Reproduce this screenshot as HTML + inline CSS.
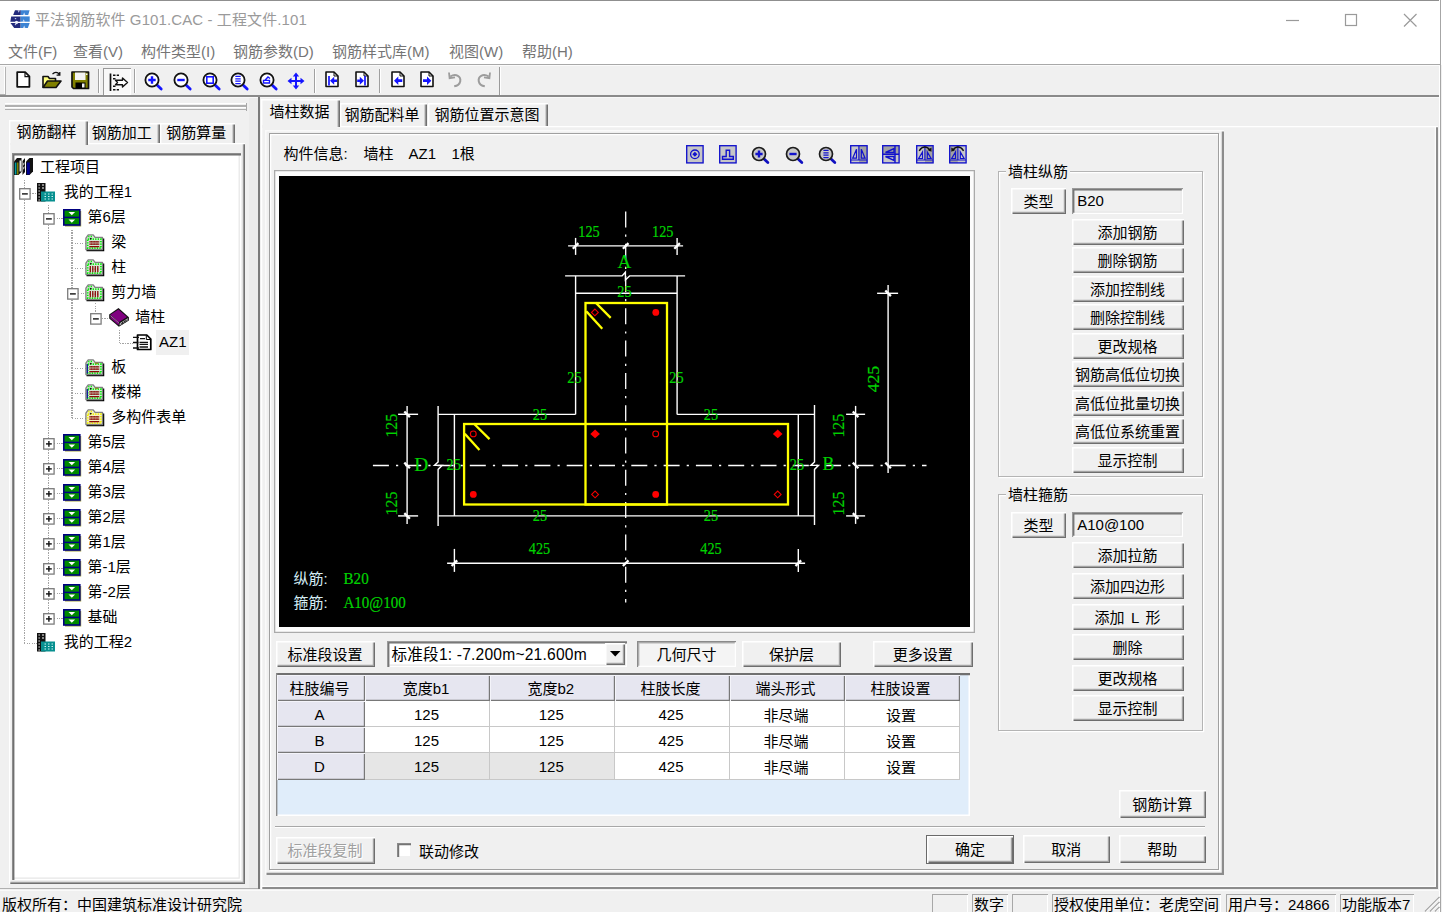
<!DOCTYPE html>
<html lang="zh-CN"><head><meta charset="utf-8"><title>平法钢筋软件 G101.CAC - 工程文件.101</title>
<style>
html,body{margin:0;padding:0}
body{width:1442px;height:912px;overflow:hidden;background:#f0f0f0;font-family:"Liberation Sans","Noto Sans CJK SC",sans-serif;font-size:15px;color:#000;position:relative;line-height:1}
div,span{box-sizing:border-box}
.a{position:absolute}
.t{position:absolute;white-space:nowrap;font-size:15px;line-height:20px;height:20px}
.btn{position:absolute;background:#f0f0f0;text-align:center;white-space:nowrap;font-size:15px;
 box-shadow:inset 1.5px 1.5px 0 #fff, inset -1px -1px 0 #6e6e6e, inset -2.2px -2.2px 0 #a3a3a3}
.btn.def{box-shadow:inset 0 0 0 1px #6a6a6a, inset 2.5px 2.5px 0 #fff, inset -2px -2px 0 #6e6e6e, inset -3.2px -3.2px 0 #a3a3a3}
.btn.dis{color:#a0a0a0;text-shadow:1px 1px 0 #fff}
.btn.pr{box-shadow:inset 1.2px 1.2px 0 #8a8a8a, inset -1.2px -1.2px 0 #fff, inset 2.4px 2.4px 0 #b4b4b4;background:#f4f4f4}
.edit{position:absolute;background:#f0f0f0;white-space:nowrap;font-size:15px;
 box-shadow:inset 1.2px 1.2px 0 #9a9a9a, inset -1.2px -1.2px 0 #fff, inset 2.4px 2.4px 0 #6e6e6e, inset -2.4px -2.4px 0 #e6e6e6}
.grp{position:absolute;border:1px solid #d0d0d0;box-shadow:inset 1px 1px 0 #fff, 1px 1px 0 #fff}
.mi{position:absolute;top:41.5px;height:20px;line-height:20px;font-size:15px;color:#757575;white-space:nowrap}
.tr{position:absolute;height:20px;line-height:20px;font-size:15px;white-space:nowrap}
.th{position:absolute;background:#e6e6f0;text-align:center;font-size:15px;white-space:nowrap;padding-right:3px;
 box-shadow:inset 1px 1px 0 #f4f4fa, inset -1.2px -1.2px 0 #787878}
.td{position:absolute;background:#fff;text-align:center;font-size:15px;white-space:nowrap;padding-right:2px;
 box-shadow:inset -1px -1px 0 #c8c8c8}
.sp{position:absolute;top:894px;height:19px;line-height:21px;font-size:15px;white-space:nowrap;padding-left:2px;
 box-shadow:inset 1px 1px 0 #a8a8a8, inset -1px 0 0 #fff}
svg{position:absolute;overflow:visible}
</style></head>
<body>
<div class="a" style="left:0px;top:0px;width:1442px;height:65px;background:#fff"></div>
<div class="a" style="left:0px;top:0px;width:1441px;height:1px;background:#8f8f8f"></div>
<div class="a" style="left:1438.6px;top:0px;width:1.7px;height:912px;background:#fff"></div>
<div class="a" style="left:1440.2px;top:0px;width:1.3px;height:912px;background:#a6a6a6"></div>
<div class="a" style="left:1441.5px;top:0px;width:0.5px;height:912px;background:#d8d8d8"></div>
<svg style="left:9.500px;top:9.700px" width="20.500" height="18.500" viewBox="0 0 20.500 18.500">
<path d="M5 0.300H10.800V5H3.200Z" fill="#222a7c"/><path d="M10.800 0.300H19.600L18.200 5H10.800Z" fill="#3c84d4"/>
<path d="M1.200 6.400H10.600V11.700H0.300Z" fill="#222a7c"/><path d="M10.600 6.400H19.700V11.700H10.600Z" fill="#3c84d4"/>
<path d="M0.500 13.100H10.600V18H4.200Z" fill="#222a7c"/><path d="M10.600 13.100H19.700L17.800 18H10.600Z" fill="#3c84d4"/>
<path d="M7.500 0.300l1.200 2.400l1.200-2.400zM13 5l1.200-2.400l1.200 2.400zM4.500 8l1 1.600l1-1.600zM12.500 11.700l1.200-2.400l1.200 2.400zM4.500 14l1 1.600l1-1.600zM13 18l1.200-2.400l1.200 2.400z" fill="#e8eefc" opacity=".8"/>
<circle cx="6.500" cy="12.400" r="1.600" fill="#eef2fc"/></svg>
<div class="t" style="left:35px;top:9.5px;color:#9a9a9a;font-size:15px;letter-spacing:0.1px">平法钢筋软件 G101.CAC - 工程文件.101</div>
<svg style="left:1280px;top:8px" width="150" height="24" viewBox="0 0 150 24">
<path d="M6 12.500h13" stroke="#9a9a9a" stroke-width="1.200" fill="none"/>
<rect x="65.500" y="6.500" width="11" height="11" stroke="#9a9a9a" stroke-width="1.200" fill="none"/>
<path d="M124 6l12.500 12.500M136.500 6l-12.500 12.500" stroke="#9a9a9a" stroke-width="1.200" fill="none"/></svg>
<div class="mi" style="left:8px">文件(F)</div>
<div class="mi" style="left:73px">查看(V)</div>
<div class="mi" style="left:141px">构件类型(I)</div>
<div class="mi" style="left:233px">钢筋参数(D)</div>
<div class="mi" style="left:332px">钢筋样式库(M)</div>
<div class="mi" style="left:449px">视图(W)</div>
<div class="mi" style="left:522px">帮助(H)</div>
<div class="a" style="left:0px;top:63.7px;width:1440px;height:1.1px;background:#a8a8a8"></div>
<div class="a" style="left:0px;top:64.8px;width:1440px;height:1px;background:#fbfbfb"></div>
<div class="a" style="left:0px;top:95px;width:1438.5px;height:2.3px;background:#8a8a8a"></div>
<div class="a" style="left:0px;top:97.3px;width:1438.5px;height:1px;background:#f8f8f8"></div>
<div class="a" style="left:3.8px;top:67px;width:1.3px;height:27.5px;background:#fff"></div>
<div class="a" style="left:5.1px;top:67px;width:1.1px;height:27.5px;background:#b4b4b4"></div>
<div class="a" style="left:0px;top:93.8px;width:5.5px;height:1px;background:#b0b0b0"></div>
<div class="a" style="left:498.5px;top:67px;width:1.5px;height:28px;background:#9a9a9a"></div>
<div class="a" style="left:500px;top:67px;width:1px;height:28px;background:#fff"></div>
<div class="a" style="left:97.5px;top:69px;width:1.2px;height:24px;background:#a0a0a0"></div>
<div class="a" style="left:98.7px;top:69px;width:1.2px;height:24px;background:#fff"></div>
<div class="a" style="left:134px;top:69px;width:1.2px;height:24px;background:#a0a0a0"></div>
<div class="a" style="left:135.2px;top:69px;width:1.2px;height:24px;background:#fff"></div>
<div class="a" style="left:314px;top:69px;width:1.2px;height:24px;background:#a0a0a0"></div>
<div class="a" style="left:315.2px;top:69px;width:1.2px;height:24px;background:#fff"></div>
<div class="a" style="left:378.5px;top:69px;width:1.2px;height:24px;background:#a0a0a0"></div>
<div class="a" style="left:379.7px;top:69px;width:1.2px;height:24px;background:#fff"></div>
<div class="a" style="left:103px;top:67.5px;width:28px;height:27px;background:#f8f8f8;box-shadow:inset 1px 1px 0 #9a9a9a, inset -1px -1px 0 #fff"></div>
<svg style="left:16px;top:71px" width="14.5" height="17" viewBox="0 0 14.5 17"><path d="M1.200 1.200h8l4.200 4.200v10.400h-12.200z" fill="#fff" stroke="#111" stroke-width="1.800" stroke-linejoin="round"/><path d="M9 1.500v4.200h4.200" fill="none" stroke="#111" stroke-width="1.200"/></svg>
<svg style="left:42px;top:70.5px" width="20" height="18" viewBox="0 0 20 18"><path d="M1 16.500V5.500h5l1.500 2h6v3" fill="#ffff80" stroke="#111" stroke-width="1.600" stroke-linejoin="round"/><path d="M1 16.500l4.500-6.500h13.500l-5 6.500z" fill="#808000" stroke="#111" stroke-width="1.600" stroke-linejoin="round"/><path d="M10.500 3.200c2-2.400 5-2.400 7 .3M17.800 1v3.200h-3.200" fill="none" stroke="#111" stroke-width="1.300"/></svg>
<svg style="left:71px;top:71px" width="18.5" height="18.5" viewBox="0 0 18.5 18.5"><path d="M1 1h16.500v16.500h-15l-1.500-1.500z" fill="#808000" stroke="#111" stroke-width="1.700" stroke-linejoin="round"/><rect x="4" y="1.500" width="10.500" height="7.500" fill="#f4f4f4"/><rect x="4.500" y="11.500" width="10" height="6" fill="#000"/><rect x="11" y="12.500" width="2.500" height="4" fill="#f4f4f4"/><rect x="15" y="2.500" width="1.500" height="1.500" fill="#f4f4f4"/></svg>
<svg style="left:109px;top:72.5px" width="20" height="19" viewBox="0 0 20 19"><path d="M1.500 0.500v17.500" stroke="#111" stroke-width="1.700" fill="none"/><path d="M4 2.300h6M4 5.800h3.500M4 13.200h3.500M4 16.700h6" stroke="#111" stroke-width="1.500" stroke-dasharray="2.500 1.200" fill="none"/><path d="M6.500 7.300h7v-2.300l5 4.500l-5 4.500v-2.300h-7l2-2.200z" fill="#fff" stroke="#111" stroke-width="1.400" stroke-linejoin="round"/></svg>
<svg style="left:141.9px;top:69.9px" width="22" height="22" viewBox="-10 -10 22 22"><path d="M4.500 4.500L9.200 9" stroke="#1414ff" stroke-width="2.800" stroke-linecap="round" fill="none"/><circle cx="0" cy="0" r="6.600" fill="#fff" stroke="#111" stroke-width="1.800"/><path d="M-3.700 0h7.400M0 -3.700v7.400" stroke="#1414ff" stroke-width="2.400" fill="none"/></svg>
<svg style="left:170.7px;top:69.9px" width="22" height="22" viewBox="-10 -10 22 22"><path d="M4.500 4.500L9.200 9" stroke="#1414ff" stroke-width="2.800" stroke-linecap="round" fill="none"/><circle cx="0" cy="0" r="6.600" fill="#fff" stroke="#111" stroke-width="1.800"/><path d="M-3.700 0h7.400" stroke="#1414ff" stroke-width="2.400" fill="none"/></svg>
<svg style="left:199.6px;top:69.9px" width="22" height="22" viewBox="-10 -10 22 22"><path d="M4.500 4.500L9.200 9" stroke="#1414ff" stroke-width="2.800" stroke-linecap="round" fill="none"/><circle cx="0" cy="0" r="6.600" fill="#fff" stroke="#111" stroke-width="1.800"/><rect x="-3.200" y="-3.200" width="6.400" height="6.400" stroke="#1414ff" stroke-width="1.600" fill="none"/></svg>
<svg style="left:228.4px;top:69.9px" width="22" height="22" viewBox="-10 -10 22 22"><path d="M4.500 4.500L9.200 9" stroke="#1414ff" stroke-width="2.800" stroke-linecap="round" fill="none"/><circle cx="0" cy="0" r="6.600" fill="#fff" stroke="#111" stroke-width="1.800"/><path d="M-2.700 -3.600h5.400M-2.700 -1.200h5.400M-2.700 1.200h5.400M-2.700 3.600h5.400" stroke="#1414ff" stroke-width="1.300" fill="none"/></svg>
<svg style="left:257.4px;top:69.9px" width="22" height="22" viewBox="-10 -10 22 22"><path d="M4.500 4.500L9.200 9" stroke="#1414ff" stroke-width="2.800" stroke-linecap="round" fill="none"/><circle cx="0" cy="0" r="6.600" fill="#fff" stroke="#111" stroke-width="1.800"/><path d="M-3.500 3v-2.600h6v2.600zM-2 0.300l3-3.300l2 1.500" stroke="#1414ff" stroke-width="1.400" fill="none"/></svg>
<svg style="left:287px;top:72px" width="18" height="18" viewBox="0 0 18 18"><path d="M9 0.500l3.200 4h-2.200v3.500h3.500v-2.200l4 3.200l-4 3.200v-2.200h-3.500v3.500h2.200l-3.200 4l-3.200-4h2.200v-3.500h-3.500v2.200l-4-3.200l4-3.200v2.200h3.500v-3.500h-2.200z" fill="#1414ff"/></svg>
<svg style="left:325px;top:71.3px" width="14" height="16.5" viewBox="0 0 14 16.5"><path d="M1 1h8 l4 4 v10.5 h-12 z" fill="#fff" stroke="#111" stroke-width="1.600" stroke-linejoin="round"/><path d="M9 1v4h4" fill="none" stroke="#111" stroke-width="1"/><path d="M4 5v9.500" stroke="#1414ff" stroke-width="1.700" fill="none"/><path d="M5 9.700l4.200-4v2.700h2.800v2.600h-2.800v2.700z" fill="#1414ff"/></svg>
<svg style="left:354.9px;top:71.3px" width="14" height="16.5" viewBox="0 0 14 16.5"><path d="M1 1h8 l4 4 v10.5 h-12 z" fill="#fff" stroke="#111" stroke-width="1.600" stroke-linejoin="round"/><path d="M9 1v4h4" fill="none" stroke="#111" stroke-width="1"/><path d="M10 5v9.500" stroke="#1414ff" stroke-width="1.700" fill="none"/><path d="M9 9.700l-4.200-4v2.700h-2.600v2.600h2.600v2.700z" fill="#1414ff"/></svg>
<svg style="left:391px;top:71.3px" width="14" height="16.5" viewBox="0 0 14 16.5"><path d="M1 1h8 l4 4 v10.5 h-12 z" fill="#fff" stroke="#111" stroke-width="1.600" stroke-linejoin="round"/><path d="M9 1v4h4" fill="none" stroke="#111" stroke-width="1"/><path d="M3 9.700l4.300-4.200v2.800h4v2.800h-4v2.800z" fill="#1414ff"/></svg>
<svg style="left:419.7px;top:71.3px" width="14" height="16.5" viewBox="0 0 14 16.5"><path d="M1 1h8 l4 4 v10.5 h-12 z" fill="#fff" stroke="#111" stroke-width="1.600" stroke-linejoin="round"/><path d="M9 1v4h4" fill="none" stroke="#111" stroke-width="1"/><path d="M11.300 9.700l-4.300-4.200v2.800h-4v2.800h4v2.800z" fill="#1414ff"/></svg>
<svg style="left:448px;top:70.7px" width="13.5" height="16.5" viewBox="0 0 13.5 16.5"><path d="M2.200 5.500c6-3.500 11 0 10 5c-.6 2.700-3 4.300-6 4.800" fill="none" stroke="#9c9c9c" stroke-width="2"/><path d="M1 1.500l.6 5.600l5.400-.8" fill="none" stroke="#9c9c9c" stroke-width="1.800"/></svg>
<svg style="left:477px;top:70.7px" width="13.5" height="16.5" viewBox="0 0 13.5 16.5"><path d="M11.800 5.500c-6-3.500-11 0-10 5c.6 2.700 3 4.300 6 4.800" fill="none" stroke="#9c9c9c" stroke-width="2"/><path d="M13 1.500l-.6 5.600l-5.400-.8" fill="none" stroke="#9c9c9c" stroke-width="1.800"/></svg>
<div class="a" style="left:5px;top:103px;width:242px;height:1.3px;background:#fff"></div>
<div class="a" style="left:5px;top:105.4px;width:242px;height:1.2px;background:#b0b0b0"></div>
<div class="a" style="left:5px;top:107.2px;width:242px;height:1.3px;background:#fff"></div>
<div class="a" style="left:5px;top:109.2px;width:242px;height:1.2px;background:#b0b0b0"></div>
<div class="a" style="left:246px;top:103px;width:1.2px;height:7.5px;background:#a8a8a8"></div>
<div class="a" style="left:9px;top:143.3px;width:235.5px;height:740.4px;box-shadow:inset 1.3px 1.3px 0 #fff, inset -1.1px -1.1px 0 #707070, inset -2.200px -2.200px 0 #a0a0a0"></div>
<div class="a" style="left:87.5px;top:122.9px;width:72px;height:20.6px;background:#f0f0f0;box-shadow:inset 1.4px 1.4px 0 #fff, inset -1.2px 0 0 #707070, inset -2.4px 0 0 #a0a0a0;"></div>
<div class="a" style="left:159.5px;top:122.9px;width:75px;height:20.6px;background:#f0f0f0;box-shadow:inset 1.4px 1.4px 0 #fff, inset -1.2px 0 0 #707070, inset -2.4px 0 0 #a0a0a0;"></div>
<div class="a" style="left:9px;top:119.6px;width:78.5px;height:25px;background:#f0f0f0;box-shadow:inset 1.4px 1.4px 0 #fff, inset -1.2px 0 0 #707070, inset -2.4px 0 0 #a0a0a0;"></div>
<div class="a" style="left:10.4px;top:142.8px;width:74.8px;height:2.6px;background:#f0f0f0"></div>
<div class="t" style="left:16.5px;top:121.8px;">钢筋翻样</div>
<div class="t" style="left:91.7px;top:122.9px;">钢筋加工</div>
<div class="t" style="left:166.2px;top:122.9px;">钢筋算量</div>
<div class="a" style="left:11.5px;top:153.1px;width:229.7px;height:726.6px;background:#fff;box-shadow:inset 1.2px 1.2px 0 #8c8c8c, inset 2.400px 2.400px 0 #6a6a6a, inset -1.2px -1.2px 0 #fff, inset -2.400px -2.400px 0 #e6e6e6"></div>
<div class="a" style="left:23.8px;top:180px;width:1.200px;height:462.5px;background-image:repeating-linear-gradient(to bottom,#a4a4a4 0,#a4a4a4 1.250px,transparent 1.250px,transparent 2.500px)"></div>
<div class="a" style="left:47.5px;top:205px;width:1.200px;height:412.5px;background-image:repeating-linear-gradient(to bottom,#a4a4a4 0,#a4a4a4 1.250px,transparent 1.250px,transparent 2.500px)"></div>
<div class="a" style="left:71.4px;top:230px;width:1.200px;height:187.5px;background-image:repeating-linear-gradient(to bottom,#a4a4a4 0,#a4a4a4 1.250px,transparent 1.250px,transparent 2.500px)"></div>
<div class="a" style="left:95.2px;top:303px;width:1.200px;height:8.5px;background-image:repeating-linear-gradient(to bottom,#a4a4a4 0,#a4a4a4 1.250px,transparent 1.250px,transparent 2.500px)"></div>
<div class="a" style="left:118.9px;top:330px;width:1.200px;height:12.5px;background-image:repeating-linear-gradient(to bottom,#a4a4a4 0,#a4a4a4 1.250px,transparent 1.250px,transparent 2.500px)"></div>
<div class="a" style="left:30px;top:192.7px;width:8px;height:1.200px;background-image:repeating-linear-gradient(to right,#a4a4a4 0,#a4a4a4 1.250px,transparent 1.250px,transparent 2.500px)"></div>
<div class="a" style="left:24.4px;top:642.7px;width:13.6px;height:1.200px;background-image:repeating-linear-gradient(to right,#a4a4a4 0,#a4a4a4 1.250px,transparent 1.250px,transparent 2.500px)"></div>
<div class="a" style="left:54px;top:217.7px;width:8.5px;height:1.200px;background-image:repeating-linear-gradient(to right,#a4a4a4 0,#a4a4a4 1.250px,transparent 1.250px,transparent 2.500px)"></div>
<div class="a" style="left:54px;top:442.7px;width:8.5px;height:1.200px;background-image:repeating-linear-gradient(to right,#a4a4a4 0,#a4a4a4 1.250px,transparent 1.250px,transparent 2.500px)"></div>
<div class="a" style="left:54px;top:467.7px;width:8.5px;height:1.200px;background-image:repeating-linear-gradient(to right,#a4a4a4 0,#a4a4a4 1.250px,transparent 1.250px,transparent 2.500px)"></div>
<div class="a" style="left:54px;top:492.7px;width:8.5px;height:1.200px;background-image:repeating-linear-gradient(to right,#a4a4a4 0,#a4a4a4 1.250px,transparent 1.250px,transparent 2.500px)"></div>
<div class="a" style="left:54px;top:517.7px;width:8.5px;height:1.200px;background-image:repeating-linear-gradient(to right,#a4a4a4 0,#a4a4a4 1.250px,transparent 1.250px,transparent 2.500px)"></div>
<div class="a" style="left:54px;top:542.7px;width:8.5px;height:1.200px;background-image:repeating-linear-gradient(to right,#a4a4a4 0,#a4a4a4 1.250px,transparent 1.250px,transparent 2.500px)"></div>
<div class="a" style="left:54px;top:567.7px;width:8.5px;height:1.200px;background-image:repeating-linear-gradient(to right,#a4a4a4 0,#a4a4a4 1.250px,transparent 1.250px,transparent 2.500px)"></div>
<div class="a" style="left:54px;top:592.7px;width:8.5px;height:1.200px;background-image:repeating-linear-gradient(to right,#a4a4a4 0,#a4a4a4 1.250px,transparent 1.250px,transparent 2.500px)"></div>
<div class="a" style="left:54px;top:617.7px;width:8.5px;height:1.200px;background-image:repeating-linear-gradient(to right,#a4a4a4 0,#a4a4a4 1.250px,transparent 1.250px,transparent 2.500px)"></div>
<div class="a" style="left:72px;top:242.7px;width:13.5px;height:1.200px;background-image:repeating-linear-gradient(to right,#a4a4a4 0,#a4a4a4 1.250px,transparent 1.250px,transparent 2.500px)"></div>
<div class="a" style="left:72px;top:267.7px;width:13.5px;height:1.200px;background-image:repeating-linear-gradient(to right,#a4a4a4 0,#a4a4a4 1.250px,transparent 1.250px,transparent 2.500px)"></div>
<div class="a" style="left:72px;top:367.7px;width:13.5px;height:1.200px;background-image:repeating-linear-gradient(to right,#a4a4a4 0,#a4a4a4 1.250px,transparent 1.250px,transparent 2.500px)"></div>
<div class="a" style="left:72px;top:392.7px;width:13.5px;height:1.200px;background-image:repeating-linear-gradient(to right,#a4a4a4 0,#a4a4a4 1.250px,transparent 1.250px,transparent 2.500px)"></div>
<div class="a" style="left:72px;top:417.7px;width:13.5px;height:1.200px;background-image:repeating-linear-gradient(to right,#a4a4a4 0,#a4a4a4 1.250px,transparent 1.250px,transparent 2.500px)"></div>
<div class="a" style="left:78px;top:292.7px;width:7px;height:1.200px;background-image:repeating-linear-gradient(to right,#a4a4a4 0,#a4a4a4 1.250px,transparent 1.250px,transparent 2.500px)"></div>
<div class="a" style="left:101.5px;top:317.7px;width:7.5px;height:1.200px;background-image:repeating-linear-gradient(to right,#a4a4a4 0,#a4a4a4 1.250px,transparent 1.250px,transparent 2.500px)"></div>
<div class="a" style="left:119.5px;top:342.7px;width:13px;height:1.200px;background-image:repeating-linear-gradient(to right,#a4a4a4 0,#a4a4a4 1.250px,transparent 1.250px,transparent 2.500px)"></div>
<svg style="left:13.2px;top:157.2px" width="21" height="19" viewBox="0 0 21 19"><path d="M1 4.500l3-3.500h4.500v14l-3 3h-4.500z" fill="#111"/><path d="M1.800 5.500h1.600v12h-1.600z" fill="#00a0a0"/><path d="M4 5.500h1.500v12h-1.500z" fill="#808000"/><path d="M6.500 3.500h1.600v11h-1.600z" fill="#e8e8e8"/><path d="M9.500 4l2.500-3v14l-2.500 3z" fill="#111"/><path d="M10.200 6.500l1.200-1.400v2.200l-1.200 1.400zM10.200 10.500l1.200-1.400v2.200l-1.200 1.400z" fill="#ddd"/><path d="M13 4.500l3.500-3.500h3.500v13.500l-3.500 3.500h-3.500z" fill="#111"/><path d="M13.800 5.500h3v12h-3z" fill="#000090"/></svg>
<div class="tr" style="left:40px;top:157px">工程项目</div>
<svg style="left:18.9px;top:187.7px" width="11.8" height="11.8" viewBox="0 0 11.8 11.8"><rect x="0.700" y="0.700" width="10.400" height="10.400" fill="#fff" stroke="#7c7c7c" stroke-width="1.300"/><path d="M3 5.900h5.800" stroke="#111" stroke-width="1.400"/></svg>
<svg style="left:37.4px;top:182.5px" width="18" height="19" viewBox="0 0 18 19"><rect x="0" y="0" width="8.500" height="18.500" fill="#111"/><rect x="4" y="8.500" width="14" height="10" fill="#089090"/><path d="M1.500 2h1.300M1.500 5h1.300M1.500 8h1.300M1.500 11h1.300M1.500 14h1.300M1.500 17h1.300M5 2h2M5 5h2" stroke="#fff" stroke-width="1.200"/><path d="M7.500 11h1.500M11 11h1.500M14.500 11h1.500M7.500 13.500h1.500M11 13.500h1.500M14.500 13.500h1.500M7.500 16h1.500M11 16h1.500M14.500 16h1.500" stroke="#c8f0f0" stroke-width="1.200"/></svg>
<div class="tr" style="left:63.7px;top:182px">我的工程1</div>
<svg style="left:42.6px;top:212.7px" width="11.8" height="11.8" viewBox="0 0 11.8 11.8"><rect x="0.700" y="0.700" width="10.400" height="10.400" fill="#fff" stroke="#7c7c7c" stroke-width="1.300"/><path d="M3 5.900h5.800" stroke="#111" stroke-width="1.400"/></svg>
<svg style="left:62.6px;top:208.8px" width="19" height="18.5" viewBox="0 0 19 18.5"><rect x="2" y="2" width="16.200" height="15.500" fill="#a0a040"/><rect x="0.800" y="0.800" width="16" height="15.200" fill="#008a00" stroke="#000080" stroke-width="1.600"/><path d="M1 8.400h15.500" stroke="#000080" stroke-width="1.500"/><path d="M5.500 3l3.300 3.300l3.300-3.300zM5.500 10.500l3.300 3.300l3.300-3.300z" fill="#fff"/></svg>
<div class="tr" style="left:87.4px;top:207px">第6层</div>
<svg style="left:85.4px;top:234px" width="19.5" height="17.5" viewBox="0 0 19.5 17.5"><path d="M1.500 16.300h16.800v-11.800" fill="none" stroke="#000" stroke-width="1.900"/><path d="M0.900 15.500v-11.300l2.300-3.300h5l1.900 2.500h7.400v12.100z" fill="#d4e8d4" stroke="#808080" stroke-width="1.300" stroke-linejoin="round"/><path d="M2.700 5.200h13.200v9h-13.200z" fill="none" stroke="#00ee00" stroke-width="1.700" stroke-dasharray="1.250 1.250"/><path d="M3.200 2.600h4.300" stroke="#00ee00" stroke-width="1.500" stroke-dasharray="1.250 1.250"/><path d="M4.800 3.600l2.400 1.100l-2.400 1.100z" fill="#111"/><path d="M4.300 7.800h10M4.300 10.200h10M4.300 12.600h10" stroke="#8a0a0a" stroke-width="1.300"/><path d="M6.500 7v6.300M9.300 7v6.300M12 7v6.300" stroke="#8a0a0a" stroke-width="0.700" stroke-dasharray="1.250 1.250"/></svg>
<div class="tr" style="left:111.3px;top:232px">梁</div>
<svg style="left:85.4px;top:259px" width="19.5" height="17.5" viewBox="0 0 19.5 17.5"><path d="M1.500 16.300h16.800v-11.800" fill="none" stroke="#000" stroke-width="1.900"/><path d="M0.900 15.500v-11.300l2.300-3.300h5l1.900 2.500h7.400v12.100z" fill="#d4e8d4" stroke="#808080" stroke-width="1.300" stroke-linejoin="round"/><path d="M2.700 5.200h13.200v9h-13.200z" fill="none" stroke="#00ee00" stroke-width="1.700" stroke-dasharray="1.250 1.250"/><path d="M3.200 2.600h4.300" stroke="#00ee00" stroke-width="1.500" stroke-dasharray="1.250 1.250"/><path d="M4.800 3.600l2.400 1.100l-2.400 1.100z" fill="#111"/><path d="M5.300 7v6.200M7.800 7v6.200M10.300 7v6.200M12.800 7v6.200" stroke="#8a0a0a" stroke-width="1.300"/><path d="M4.500 10.100h9.500" stroke="#8a0a0a" stroke-width="0.800" stroke-dasharray="1.250 1.250"/></svg>
<div class="tr" style="left:111.3px;top:257px">柱</div>
<svg style="left:66.5px;top:287.7px" width="11.8" height="11.8" viewBox="0 0 11.8 11.8"><rect x="0.700" y="0.700" width="10.400" height="10.400" fill="#fff" stroke="#7c7c7c" stroke-width="1.300"/><path d="M3 5.900h5.800" stroke="#111" stroke-width="1.400"/></svg>
<svg style="left:85.4px;top:284px" width="19.5" height="17.5" viewBox="0 0 19.5 17.5"><path d="M1.500 16.300h16.800v-11.800" fill="none" stroke="#000" stroke-width="1.900"/><path d="M0.900 15.500v-11.300l2.300-3.300h5l1.900 2.500h7.400v12.100z" fill="#d4e8d4" stroke="#808080" stroke-width="1.300" stroke-linejoin="round"/><path d="M2.700 5.200h13.200v9h-13.200z" fill="none" stroke="#00ee00" stroke-width="1.700" stroke-dasharray="1.250 1.250"/><path d="M3.200 2.600h4.300" stroke="#00ee00" stroke-width="1.500" stroke-dasharray="1.250 1.250"/><path d="M4.800 3.600l2.400 1.100l-2.400 1.100z" fill="#111"/><path d="M5.300 7v6.200M7.800 7v6.200M10.300 7v6.200M12.800 7v6.200" stroke="#8a0a0a" stroke-width="1.300"/><path d="M4.500 10.100h9.500" stroke="#8a0a0a" stroke-width="0.800" stroke-dasharray="1.250 1.250"/></svg>
<div class="tr" style="left:111.3px;top:282px">剪力墙</div>
<svg style="left:90.3px;top:312.7px" width="11.8" height="11.8" viewBox="0 0 11.8 11.8"><rect x="0.700" y="0.700" width="10.400" height="10.400" fill="#fff" stroke="#7c7c7c" stroke-width="1.300"/><path d="M3 5.900h5.800" stroke="#111" stroke-width="1.400"/></svg>
<svg style="left:109px;top:307.7px" width="20" height="19" viewBox="0 0 20 19"><path d="M0.200 6.500l9.300-6.400l10.400 9.200v3.300l-10 6.200l-9.700-8.300z" fill="#111"/><path d="M1.400 6.800l8-5.400l8.600 7.600l-8.300 5.200z" fill="#800080"/><path d="M1.400 8.300v1.900l8 6.800l.6-1.700z" fill="#800080"/><path d="M1.400 7.600l8.500 7.300" stroke="#d8a8d8" stroke-width=".7" fill="none"/><path d="M10.800 15.200l8-5v2l-8.300 5.200z" fill="#e4e4e4"/><path d="M11.500 16l7-4.400M13.500 13.700v2.500M16 12.200v2.500" stroke="#222" stroke-width=".9" fill="none"/></svg>
<div class="tr" style="left:135.3px;top:307px">墙柱</div>
<svg style="left:132.7px;top:334px" width="18.5" height="17" viewBox="0 0 18.5 17"><path d="M4.500 1h9.300l4 4v10.500h-13.300z" fill="#fff" stroke="#000" stroke-width="1.700" stroke-linejoin="round"/><path d="M13.300 1.500v4h4" fill="none" stroke="#000" stroke-width="1"/><path d="M0 3.300h6M0 8.500h5.500M0 14h6" stroke="#111" stroke-width="1.300"/><path d="M7 4.600h5M6.500 8.400h8.500M6.500 10.400h8.500M6.500 13h8.500" stroke="#111" stroke-width="1.300"/></svg>
<div class="a" style="left:156.4px;top:330.3px;width:32.5px;height:24.8px;background:#f0f0f0"></div>
<div class="tr" style="left:159px;top:332px">AZ1</div>
<svg style="left:85.4px;top:359px" width="19.5" height="17.5" viewBox="0 0 19.5 17.5"><path d="M1.500 16.300h16.800v-11.800" fill="none" stroke="#000" stroke-width="1.900"/><path d="M0.900 15.500v-11.300l2.300-3.300h5l1.900 2.500h7.400v12.100z" fill="#d4e8d4" stroke="#808080" stroke-width="1.300" stroke-linejoin="round"/><path d="M2.700 5.200h13.200v9h-13.200z" fill="none" stroke="#00ee00" stroke-width="1.700" stroke-dasharray="1.250 1.250"/><path d="M3.200 2.600h4.300" stroke="#00ee00" stroke-width="1.500" stroke-dasharray="1.250 1.250"/><path d="M4.800 3.600l2.400 1.100l-2.400 1.100z" fill="#111"/><path d="M4.300 7.800h10M4.300 10.200h10M4.300 12.600h10" stroke="#8a0a0a" stroke-width="1.300"/><path d="M6.500 7v6.300M9.300 7v6.300M12 7v6.300" stroke="#8a0a0a" stroke-width="0.700" stroke-dasharray="1.250 1.250"/><path d="M2.300 5v9.500" stroke="#1010a0" stroke-width="1.300"/><path d="M9.800 4.300h3.500" stroke="#909020" stroke-width="1.300"/></svg>
<div class="tr" style="left:111.3px;top:357px">板</div>
<svg style="left:85.4px;top:384px" width="19.5" height="17.5" viewBox="0 0 19.5 17.5"><path d="M1.500 16.300h16.800v-11.800" fill="none" stroke="#000" stroke-width="1.900"/><path d="M0.900 15.500v-11.300l2.300-3.300h5l1.900 2.500h7.400v12.100z" fill="#d4e8d4" stroke="#808080" stroke-width="1.300" stroke-linejoin="round"/><path d="M2.700 5.200h13.200v9h-13.200z" fill="none" stroke="#00ee00" stroke-width="1.700" stroke-dasharray="1.250 1.250"/><path d="M3.200 2.600h4.300" stroke="#00ee00" stroke-width="1.500" stroke-dasharray="1.250 1.250"/><path d="M4.800 3.600l2.400 1.100l-2.400 1.100z" fill="#111"/><path d="M4.300 7.800h10M4.300 10.200h10M4.300 12.600h10" stroke="#8a0a0a" stroke-width="1.300"/><path d="M6.500 7v6.300M9.300 7v6.300M12 7v6.300" stroke="#8a0a0a" stroke-width="0.700" stroke-dasharray="1.250 1.250"/><path d="M2.300 5v9.500" stroke="#1010a0" stroke-width="1.300"/><path d="M9.800 4.300h3.500" stroke="#909020" stroke-width="1.300"/></svg>
<div class="tr" style="left:111.3px;top:382px">楼梯</div>
<svg style="left:85.4px;top:409px" width="19.5" height="17.5" viewBox="0 0 19.5 17.5"><path d="M1.500 16.300h16.800v-11.800" fill="none" stroke="#000" stroke-width="1.900"/><path d="M0.900 15.500v-11.300l2.300-3.300h5l1.900 2.500h7.400v12.100z" fill="#f4f0c0" stroke="#808080" stroke-width="1.300" stroke-linejoin="round"/><path d="M2.700 5.200h13.200v9h-13.200z" fill="none" stroke="#f0f000" stroke-width="1.700" stroke-dasharray="1.250 1.250"/><path d="M3.200 2.600h4.300" stroke="#f0f000" stroke-width="1.500" stroke-dasharray="1.250 1.250"/><path d="M4.800 3.600l2.400 1.100l-2.400 1.100z" fill="#111"/><path d="M4.300 7.800h10M4.300 10.200h10M4.300 12.600h10" stroke="#8a0a0a" stroke-width="1.300"/><path d="M6.500 7v6.300M9.300 7v6.300M12 7v6.300" stroke="#8a0a0a" stroke-width="0.700" stroke-dasharray="1.250 1.250"/></svg>
<div class="tr" style="left:111.3px;top:407px">多构件表单</div>
<svg style="left:42.6px;top:437.7px" width="11.8" height="11.8" viewBox="0 0 11.8 11.8"><rect x="0.700" y="0.700" width="10.400" height="10.400" fill="#fff" stroke="#7c7c7c" stroke-width="1.300"/><path d="M3 5.900h5.800" stroke="#111" stroke-width="1.400"/><path d="M5.900 3v5.800" stroke="#111" stroke-width="1.400"/></svg>
<svg style="left:62.6px;top:433.8px" width="19" height="18.5" viewBox="0 0 19 18.5"><rect x="2" y="2" width="16.200" height="15.500" fill="#a0a040"/><rect x="0.800" y="0.800" width="16" height="15.200" fill="#008a00" stroke="#000080" stroke-width="1.600"/><path d="M1 8.400h15.500" stroke="#000080" stroke-width="1.500"/><path d="M5.500 3l3.300 3.300l3.300-3.300zM5.500 10.500l3.300 3.300l3.300-3.300z" fill="#fff"/></svg>
<div class="tr" style="left:87.4px;top:432px">第5层</div>
<svg style="left:42.6px;top:462.7px" width="11.8" height="11.8" viewBox="0 0 11.8 11.8"><rect x="0.700" y="0.700" width="10.400" height="10.400" fill="#fff" stroke="#7c7c7c" stroke-width="1.300"/><path d="M3 5.900h5.800" stroke="#111" stroke-width="1.400"/><path d="M5.900 3v5.800" stroke="#111" stroke-width="1.400"/></svg>
<svg style="left:62.6px;top:458.8px" width="19" height="18.5" viewBox="0 0 19 18.5"><rect x="2" y="2" width="16.200" height="15.500" fill="#a0a040"/><rect x="0.800" y="0.800" width="16" height="15.200" fill="#008a00" stroke="#000080" stroke-width="1.600"/><path d="M1 8.400h15.500" stroke="#000080" stroke-width="1.500"/><path d="M5.500 3l3.300 3.300l3.300-3.300zM5.500 10.500l3.300 3.300l3.300-3.300z" fill="#fff"/></svg>
<div class="tr" style="left:87.4px;top:457px">第4层</div>
<svg style="left:42.6px;top:487.7px" width="11.8" height="11.8" viewBox="0 0 11.8 11.8"><rect x="0.700" y="0.700" width="10.400" height="10.400" fill="#fff" stroke="#7c7c7c" stroke-width="1.300"/><path d="M3 5.900h5.800" stroke="#111" stroke-width="1.400"/><path d="M5.900 3v5.800" stroke="#111" stroke-width="1.400"/></svg>
<svg style="left:62.6px;top:483.8px" width="19" height="18.5" viewBox="0 0 19 18.5"><rect x="2" y="2" width="16.200" height="15.500" fill="#a0a040"/><rect x="0.800" y="0.800" width="16" height="15.200" fill="#008a00" stroke="#000080" stroke-width="1.600"/><path d="M1 8.400h15.500" stroke="#000080" stroke-width="1.500"/><path d="M5.500 3l3.300 3.300l3.300-3.300zM5.500 10.500l3.300 3.300l3.300-3.300z" fill="#fff"/></svg>
<div class="tr" style="left:87.4px;top:482px">第3层</div>
<svg style="left:42.6px;top:512.7px" width="11.8" height="11.8" viewBox="0 0 11.8 11.8"><rect x="0.700" y="0.700" width="10.400" height="10.400" fill="#fff" stroke="#7c7c7c" stroke-width="1.300"/><path d="M3 5.900h5.800" stroke="#111" stroke-width="1.400"/><path d="M5.900 3v5.800" stroke="#111" stroke-width="1.400"/></svg>
<svg style="left:62.6px;top:508.8px" width="19" height="18.5" viewBox="0 0 19 18.5"><rect x="2" y="2" width="16.200" height="15.500" fill="#a0a040"/><rect x="0.800" y="0.800" width="16" height="15.200" fill="#008a00" stroke="#000080" stroke-width="1.600"/><path d="M1 8.400h15.500" stroke="#000080" stroke-width="1.500"/><path d="M5.500 3l3.300 3.300l3.300-3.300zM5.500 10.500l3.300 3.300l3.300-3.300z" fill="#fff"/></svg>
<div class="tr" style="left:87.4px;top:507px">第2层</div>
<svg style="left:42.6px;top:537.7px" width="11.8" height="11.8" viewBox="0 0 11.8 11.8"><rect x="0.700" y="0.700" width="10.400" height="10.400" fill="#fff" stroke="#7c7c7c" stroke-width="1.300"/><path d="M3 5.900h5.800" stroke="#111" stroke-width="1.400"/><path d="M5.900 3v5.800" stroke="#111" stroke-width="1.400"/></svg>
<svg style="left:62.6px;top:533.8px" width="19" height="18.5" viewBox="0 0 19 18.5"><rect x="2" y="2" width="16.200" height="15.500" fill="#a0a040"/><rect x="0.800" y="0.800" width="16" height="15.200" fill="#008a00" stroke="#000080" stroke-width="1.600"/><path d="M1 8.400h15.500" stroke="#000080" stroke-width="1.500"/><path d="M5.500 3l3.300 3.300l3.300-3.300zM5.500 10.500l3.300 3.300l3.300-3.300z" fill="#fff"/></svg>
<div class="tr" style="left:87.4px;top:532px">第1层</div>
<svg style="left:42.6px;top:562.7px" width="11.8" height="11.8" viewBox="0 0 11.8 11.8"><rect x="0.700" y="0.700" width="10.400" height="10.400" fill="#fff" stroke="#7c7c7c" stroke-width="1.300"/><path d="M3 5.900h5.800" stroke="#111" stroke-width="1.400"/><path d="M5.900 3v5.800" stroke="#111" stroke-width="1.400"/></svg>
<svg style="left:62.6px;top:558.8px" width="19" height="18.5" viewBox="0 0 19 18.5"><rect x="2" y="2" width="16.200" height="15.500" fill="#a0a040"/><rect x="0.800" y="0.800" width="16" height="15.200" fill="#008a00" stroke="#000080" stroke-width="1.600"/><path d="M1 8.400h15.500" stroke="#000080" stroke-width="1.500"/><path d="M5.500 3l3.300 3.300l3.300-3.300zM5.500 10.500l3.300 3.300l3.300-3.300z" fill="#fff"/></svg>
<div class="tr" style="left:87.4px;top:557px">第-1层</div>
<svg style="left:42.6px;top:587.7px" width="11.8" height="11.8" viewBox="0 0 11.8 11.8"><rect x="0.700" y="0.700" width="10.400" height="10.400" fill="#fff" stroke="#7c7c7c" stroke-width="1.300"/><path d="M3 5.900h5.800" stroke="#111" stroke-width="1.400"/><path d="M5.900 3v5.800" stroke="#111" stroke-width="1.400"/></svg>
<svg style="left:62.6px;top:583.8px" width="19" height="18.5" viewBox="0 0 19 18.5"><rect x="2" y="2" width="16.200" height="15.500" fill="#a0a040"/><rect x="0.800" y="0.800" width="16" height="15.200" fill="#008a00" stroke="#000080" stroke-width="1.600"/><path d="M1 8.400h15.500" stroke="#000080" stroke-width="1.500"/><path d="M5.500 3l3.300 3.300l3.300-3.300zM5.500 10.500l3.300 3.300l3.300-3.300z" fill="#fff"/></svg>
<div class="tr" style="left:87.4px;top:582px">第-2层</div>
<svg style="left:42.6px;top:612.7px" width="11.8" height="11.8" viewBox="0 0 11.8 11.8"><rect x="0.700" y="0.700" width="10.400" height="10.400" fill="#fff" stroke="#7c7c7c" stroke-width="1.300"/><path d="M3 5.900h5.800" stroke="#111" stroke-width="1.400"/><path d="M5.900 3v5.800" stroke="#111" stroke-width="1.400"/></svg>
<svg style="left:62.6px;top:608.8px" width="19" height="18.5" viewBox="0 0 19 18.5"><rect x="2" y="2" width="16.200" height="15.500" fill="#a0a040"/><rect x="0.800" y="0.800" width="16" height="15.200" fill="#008a00" stroke="#000080" stroke-width="1.600"/><path d="M1 8.400h15.500" stroke="#000080" stroke-width="1.500"/><path d="M5.500 3l3.300 3.300l3.300-3.300zM5.500 10.500l3.300 3.300l3.300-3.300z" fill="#fff"/></svg>
<div class="tr" style="left:87.4px;top:607px">基础</div>
<svg style="left:37.4px;top:632.5px" width="18" height="19" viewBox="0 0 18 19"><rect x="0" y="0" width="8.500" height="18.500" fill="#111"/><rect x="4" y="8.500" width="14" height="10" fill="#089090"/><path d="M1.500 2h1.300M1.500 5h1.300M1.500 8h1.300M1.500 11h1.300M1.500 14h1.300M1.500 17h1.300M5 2h2M5 5h2" stroke="#fff" stroke-width="1.200"/><path d="M7.500 11h1.500M11 11h1.500M14.500 11h1.500M7.500 13.500h1.500M11 13.500h1.500M14.500 13.500h1.500M7.500 16h1.500M11 16h1.500M14.500 16h1.500" stroke="#c8f0f0" stroke-width="1.200"/></svg>
<div class="tr" style="left:63.7px;top:632px">我的工程2</div>
<div class="a" style="left:249px;top:98px;width:8.5px;height:790.5px;background:#ebebeb"></div>
<div class="a" style="left:257.6px;top:97px;width:2.3px;height:792.3px;background:#7a7a7a"></div>
<div class="a" style="left:0px;top:888.3px;width:258px;height:1.2px;background:#b0b0b0"></div>
<div class="a" style="left:0px;top:890.3px;width:1440px;height:1px;background:#fafafa"></div>
<div class="a" style="left:260.6px;top:125.7px;width:1177.1px;height:763.6px;box-shadow:inset 1.3px 1.3px 0 #fff, inset -2px -2px 0 #8c8c8c, inset -3.300px -3.300px 0 #fcfcfc"></div>
<div class="a" style="left:339.8px;top:102.5px;width:87.7px;height:23.5px;background:#f0f0f0;box-shadow:inset 1.4px 1.4px 0 #fff, inset -1.2px 0 0 #707070, inset -2.4px 0 0 #a0a0a0;"></div>
<div class="a" style="left:427.5px;top:102.5px;width:120px;height:23.5px;background:#f0f0f0;box-shadow:inset 1.4px 1.4px 0 #fff, inset -1.2px 0 0 #707070, inset -2.4px 0 0 #a0a0a0;"></div>
<div class="a" style="left:260.6px;top:99px;width:79.2px;height:27.5px;background:#f0f0f0;box-shadow:inset 1.4px 1.4px 0 #fff, inset -1.2px 0 0 #707070, inset -2.4px 0 0 #a0a0a0;"></div>
<div class="a" style="left:262px;top:125.3px;width:75.4px;height:2.6px;background:#f0f0f0"></div>
<div class="t" style="left:269.5px;top:102.2px;">墙柱数据</div>
<div class="t" style="left:344.5px;top:104.7px;">钢筋配料单</div>
<div class="t" style="left:434.5px;top:104.7px;">钢筋位置示意图</div>
<div class="a" style="left:265.4px;top:129.9px;width:958.4px;height:745.4px;box-shadow:inset 1.5px 1.5px 0 #fafafa, inset -2.2px -2.2px 0 #8c8c8c"></div>
<div class="a" style="left:269px;top:133.4px;width:950.3px;height:736.2px;border:1.25px solid #a0a0a0;box-shadow:inset 1.25px 1.25px 0 #fff, 1.25px 1.25px 0 #fff"></div>
<div class="t" style="left:283.5px;top:144px;">构件信息:</div>
<div class="t" style="left:363.5px;top:144px;">墙柱</div>
<div class="t" style="left:408.5px;top:144px;">AZ1</div>
<div class="t" style="left:451.5px;top:144px;">1根</div>
<svg style="left:686.1px;top:145.2px" width="17.8" height="18.6" viewBox="0 0 17.8 18.6"><rect x="0.500" y="0.500" width="16.800" height="17.600" fill="#c6c6c6"/><rect x="0.700" y="0.700" width="16.400" height="17.200" fill="none" stroke="#1212cc" stroke-width="1.350"/><circle cx="8.900" cy="9.300" r="4.300" fill="none" stroke="#1212cc" stroke-width="1.300"/><path d="M8.900 6.800l2.500 2.500l-2.500 2.500l-2.500-2.500z" fill="#1212cc"/></svg>
<svg style="left:718.8px;top:145.2px" width="17.8" height="18.6" viewBox="0 0 17.8 18.6"><rect x="0.500" y="0.500" width="16.800" height="17.600" fill="#c6c6c6"/><rect x="0.700" y="0.700" width="16.400" height="17.200" fill="none" stroke="#1212cc" stroke-width="1.350"/><path d="M7.200 5.200h3.400v6.300h3.700v2.700h-10.800v-2.700h3.700z" fill="none" stroke="#1212cc" stroke-width="1.400"/></svg>
<svg style="left:748.9px;top:144.1px" width="22" height="22" viewBox="-10 -10 22 22"><path d="M4.300 4.300L8.800 8.600" stroke="#1010c0" stroke-width="2.800" stroke-linecap="round" fill="none"/><circle cx="0" cy="0" r="6.500" fill="#c8c8c8" stroke="#1c1c1c" stroke-width="1.700"/><path d="M-3.600 0h7.200M0 -3.600v7.200" stroke="#1212cc" stroke-width="2.400" fill="none"/></svg>
<svg style="left:782.8px;top:144.1px" width="22" height="22" viewBox="-10 -10 22 22"><path d="M4.300 4.300L8.800 8.600" stroke="#1010c0" stroke-width="2.800" stroke-linecap="round" fill="none"/><circle cx="0" cy="0" r="6.500" fill="#c8c8c8" stroke="#1c1c1c" stroke-width="1.700"/><path d="M-3.600 0h7.200" stroke="#1212cc" stroke-width="2.400" fill="none"/></svg>
<svg style="left:816.4px;top:144.1px" width="22" height="22" viewBox="-10 -10 22 22"><path d="M4.300 4.300L8.800 8.600" stroke="#1010c0" stroke-width="2.800" stroke-linecap="round" fill="none"/><circle cx="0" cy="0" r="6.500" fill="#c8c8c8" stroke="#1c1c1c" stroke-width="1.700"/><path d="M-2.600 -3.600h5.200M-2.600 -1.200h5.200M-2.600 1.200h5.200M-2.600 3.600h5.200" stroke="#1212cc" stroke-width="1.300" fill="none"/></svg>
<svg style="left:850px;top:145.2px" width="17.8" height="18.6" viewBox="0 0 17.8 18.6"><rect x="0.500" y="0.500" width="8.400" height="17.600" fill="#c8c8c8"/><rect x="8.900" y="0.500" width="8.400" height="17.600" fill="#a2a2a2"/><rect x="0.700" y="0.700" width="16.400" height="17.200" fill="none" stroke="#1212cc" stroke-width="1.350"/><path d="M8.900 1v14.500M1 15h16" stroke="#1212cc" stroke-width="1.200" fill="none"/><path d="M6.500 4.2v9h-3.800zM11.300 4.2v9h3.800z" fill="none" stroke="#1212cc" stroke-width="1.200"/></svg>
<svg style="left:882.4px;top:145.2px" width="17.8" height="18.6" viewBox="0 0 17.8 18.6"><rect x="0.500" y="0.500" width="16.800" height="8.800" fill="#a2a2a2"/><rect x="0.500" y="9.300" width="16.800" height="8.800" fill="#c8c8c8"/><rect x="0.700" y="0.700" width="16.400" height="17.200" fill="none" stroke="#1212cc" stroke-width="1.350"/><path d="M1 9.300h16M13 1v17" stroke="#1212cc" stroke-width="1.400" fill="none"/><path d="M12 3.500v4h-8.500zM12 15.500v-4h-8.500z" fill="none" stroke="#1212cc" stroke-width="1.400"/></svg>
<svg style="left:916.4px;top:145.2px" width="17.8" height="18.6" viewBox="0 0 17.8 18.6"><rect x="0.500" y="0.500" width="8.400" height="17.600" fill="#c8c8c8"/><rect x="8.900" y="0.500" width="8.400" height="17.600" fill="#a2a2a2"/><rect x="0.700" y="0.700" width="16.400" height="17.200" fill="none" stroke="#1212cc" stroke-width="1.350"/><path d="M8.900 1v14.500M1 15h16" stroke="#1212cc" stroke-width="1.200" fill="none"/><path d="M6.500 7v6.5h-3.800zM11.300 7v6.5h3.800z" fill="none" stroke="#1212cc" stroke-width="1.200"/><path d="M3.200 5.800c3.200-5 8-5 11 0" stroke="#111" stroke-width="1.400" fill="none"/><path d="M11.500 5l4 1.800v-4.300z" fill="#111"/></svg>
<svg style="left:948.9px;top:145.2px" width="17.8" height="18.6" viewBox="0 0 17.8 18.6"><rect x="0.500" y="0.500" width="8.400" height="17.600" fill="#a2a2a2"/><rect x="8.900" y="0.500" width="8.400" height="17.600" fill="#c8c8c8"/><rect x="0.700" y="0.700" width="16.400" height="17.200" fill="none" stroke="#1212cc" stroke-width="1.350"/><path d="M8.900 1v14.500M1 15h16" stroke="#1212cc" stroke-width="1.200" fill="none"/><path d="M6.500 7v6.5h-3.800zM11.300 7v6.5h3.800z" fill="none" stroke="#1212cc" stroke-width="1.200"/><path d="M14.600 5.800c-3.200-5-8-5-11 0" stroke="#111" stroke-width="1.400" fill="none"/><path d="M6.300 5l-4 1.800v-4.300z" fill="#111"/></svg>
<div class="a" style="left:273.7px;top:170px;width:701.3px;height:463px;background:#fcfcfc;box-shadow:inset 0 0 0 1.3px #aaaaaa"></div>
<div class="a" style="left:279.3px;top:176.2px;width:690.3px;height:450.8px;background:#000"></div>
<svg style="left:279.5px;top:176.5px" width="690" height="450" viewBox="279.5 176.5 690 450"><g stroke="#ffffff" stroke-width="1.4" fill="none" transform="translate(-0.4 -0.6)"><line x1="575.5" y1="276" x2="575.5" y2="414.5" /><line x1="677" y1="276" x2="677" y2="414.5" /><line x1="575.5" y1="293.4" x2="677" y2="293.4" /><line x1="438" y1="414.5" x2="575.5" y2="414.5" /><line x1="677" y1="414.5" x2="814.4" y2="414.5" /><line x1="438" y1="516" x2="814.4" y2="516" /><line x1="454.3" y1="414.5" x2="454.3" y2="516" /><line x1="798.2" y1="414.5" x2="798.2" y2="516" /><path d="M565 276H622L625.300 272.300V280L629.500 276H685" /><path d="M438 406V462L434.300 465.500H442L438 469.500V526" /><path d="M814.4 405V462L810.700 465.500H818.400L814.400 469.500V525" /><line x1="568" y1="246" x2="683" y2="246" /><line x1="575.5" y1="238" x2="575.5" y2="255" /><line x1="677" y1="238" x2="677" y2="255" /><line x1="447" y1="563.3" x2="805" y2="563.3" /><line x1="454.3" y1="549" x2="454.3" y2="572" /><line x1="798.2" y1="549" x2="798.2" y2="572" /><line x1="407" y1="406" x2="407" y2="524" /><line x1="398" y1="414.4" x2="418" y2="414.4" /><line x1="398" y1="516" x2="418" y2="516" /><line x1="855.5" y1="406" x2="855.5" y2="524" /><line x1="846" y1="414.4" x2="865" y2="414.4" /><line x1="846" y1="516" x2="865" y2="516" /><line x1="888" y1="285" x2="888" y2="473" /><line x1="877" y1="293.4" x2="898" y2="293.4" /></g><g stroke="#ffffff" stroke-width="1.3" fill="none" stroke-dasharray="16 7.100 2.200 7"><line x1="625.2" y1="210.9" x2="625.2" y2="602" /><line x1="372.4" y1="465" x2="926" y2="465" /></g><g stroke="#ffffff" stroke-width="2.300" fill="none" transform="translate(-0.4 -0.6)"><line x1="572.7" y1="248.8" x2="578.3" y2="243.2" /><line x1="622.8" y1="248.8" x2="628.4" y2="243.2" /><line x1="674.2" y1="248.8" x2="679.8" y2="243.2" /><line x1="451.5" y1="566.1" x2="457.1" y2="560.5" /><line x1="622.8" y1="566.1" x2="628.4" y2="560.5" /><line x1="795.4" y1="566.1" x2="801" y2="560.5" /><line x1="404.2" y1="411.6" x2="409.8" y2="417.2" /><line x1="404.2" y1="462.7" x2="409.8" y2="468.3" /><line x1="404.2" y1="513.2" x2="409.8" y2="518.8" /><line x1="852.7" y1="411.6" x2="858.3" y2="417.2" /><line x1="852.7" y1="462.7" x2="858.3" y2="468.3" /><line x1="852.7" y1="513.2" x2="858.3" y2="518.8" /><line x1="885.2" y1="290.6" x2="890.8" y2="296.2" /><line x1="885.2" y1="462.7" x2="890.8" y2="468.3" /></g><g stroke="#ffff00" stroke-width="2.300" fill="none" stroke-linecap="square" transform="translate(0 -0.5)"><rect x="585" y="303" width="81.5" height="201.5"/><rect x="463.600" y="424" width="323.900" height="80.5"/><line x1="586.5" y1="312" x2="601" y2="328" /><line x1="596" y1="303.5" x2="609.4" y2="317" /><line x1="465" y1="434.5" x2="478.2" y2="449.2" /><line x1="474.3" y1="424.5" x2="488.2" y2="438.3" /></g><g transform="translate(-0.2 -0.6)"><path d="M591.2 312.5L594.6 309.1L598 312.5L594.6 315.9Z" fill="none" stroke="#f00000" stroke-width="1.100"/><circle cx="655.5" cy="312.5" r="3.400" fill="#ff0000"/><circle cx="473" cy="434" r="2.900" fill="none" stroke="#f00000" stroke-width="1.100"/><path d="M590 434L594.8 429.7L599.6 434L594.8 438.3Z" fill="#ff0000"/><circle cx="655.4" cy="434" r="2.900" fill="none" stroke="#f00000" stroke-width="1.100"/><path d="M772.6 434L777.4 429.7L782.2 434L777.4 438.3Z" fill="#ff0000"/><circle cx="473" cy="494.5" r="3.400" fill="#ff0000"/><path d="M591.4 494.5L594.8 491.1L598.2 494.5L594.8 497.9Z" fill="none" stroke="#f00000" stroke-width="1.100"/><circle cx="655.4" cy="494.5" r="3.400" fill="#ff0000"/><path d="M774 494.5L777.4 491.1L780.8 494.5L777.4 497.9Z" fill="none" stroke="#f00000" stroke-width="1.100"/></g><text x="588.5" y="236.8" font-size="16.2" text-anchor="middle" font-family="Liberation Serif, serif" fill="#00d200" stroke="#00d200" stroke-width="0.200" textLength="21.4" lengthAdjust="spacingAndGlyphs">125</text><text x="662.3" y="236.8" font-size="16.2" text-anchor="middle" font-family="Liberation Serif, serif" fill="#00d200" stroke="#00d200" stroke-width="0.200" textLength="21.4" lengthAdjust="spacingAndGlyphs">125</text><text x="539" y="553.3" font-size="16.2" text-anchor="middle" font-family="Liberation Serif, serif" fill="#00d200" stroke="#00d200" stroke-width="0.200" textLength="21.4" lengthAdjust="spacingAndGlyphs">425</text><text x="710.5" y="553.3" font-size="16.2" text-anchor="middle" font-family="Liberation Serif, serif" fill="#00d200" stroke="#00d200" stroke-width="0.200" textLength="21.4" lengthAdjust="spacingAndGlyphs">425</text><text x="624" y="296.8" font-size="16.2" text-anchor="middle" font-family="Liberation Serif, serif" fill="#00d200" stroke="#00d200" stroke-width="0.200" textLength="14.3" lengthAdjust="spacingAndGlyphs">25</text><text x="574" y="382.8" font-size="16.2" text-anchor="middle" font-family="Liberation Serif, serif" fill="#00d200" stroke="#00d200" stroke-width="0.200" textLength="14.3" lengthAdjust="spacingAndGlyphs">25</text><text x="676" y="382.8" font-size="16.2" text-anchor="middle" font-family="Liberation Serif, serif" fill="#00d200" stroke="#00d200" stroke-width="0.200" textLength="14.3" lengthAdjust="spacingAndGlyphs">25</text><text x="539.5" y="419.3" font-size="16.2" text-anchor="middle" font-family="Liberation Serif, serif" fill="#00d200" stroke="#00d200" stroke-width="0.200" textLength="14.3" lengthAdjust="spacingAndGlyphs">25</text><text x="710.5" y="419.3" font-size="16.2" text-anchor="middle" font-family="Liberation Serif, serif" fill="#00d200" stroke="#00d200" stroke-width="0.200" textLength="14.3" lengthAdjust="spacingAndGlyphs">25</text><text x="453.2" y="469.3" font-size="16.2" text-anchor="middle" font-family="Liberation Serif, serif" fill="#00d200" stroke="#00d200" stroke-width="0.200" textLength="14.3" lengthAdjust="spacingAndGlyphs">25</text><text x="796.5" y="469.3" font-size="16.2" text-anchor="middle" font-family="Liberation Serif, serif" fill="#00d200" stroke="#00d200" stroke-width="0.200" textLength="14.3" lengthAdjust="spacingAndGlyphs">25</text><text x="539.5" y="520.8" font-size="16.2" text-anchor="middle" font-family="Liberation Serif, serif" fill="#00d200" stroke="#00d200" stroke-width="0.200" textLength="14.3" lengthAdjust="spacingAndGlyphs">25</text><text x="710.5" y="520.8" font-size="16.2" text-anchor="middle" font-family="Liberation Serif, serif" fill="#00d200" stroke="#00d200" stroke-width="0.200" textLength="14.3" lengthAdjust="spacingAndGlyphs">25</text><text x="396.3" y="425.2" font-size="16.2" text-anchor="middle" font-family="Liberation Serif, serif" fill="#00d200" stroke="#00d200" stroke-width="0.200" textLength="23.8" lengthAdjust="spacingAndGlyphs" transform="rotate(-90 396.3 425.2)">125</text><text x="396.3" y="503" font-size="16.2" text-anchor="middle" font-family="Liberation Serif, serif" fill="#00d200" stroke="#00d200" stroke-width="0.200" textLength="23.8" lengthAdjust="spacingAndGlyphs" transform="rotate(-90 396.3 503)">125</text><text x="843.4" y="425.2" font-size="16.2" text-anchor="middle" font-family="Liberation Serif, serif" fill="#00d200" stroke="#00d200" stroke-width="0.200" textLength="23.8" lengthAdjust="spacingAndGlyphs" transform="rotate(-90 843.4 425.2)">125</text><text x="843.4" y="503" font-size="16.2" text-anchor="middle" font-family="Liberation Serif, serif" fill="#00d200" stroke="#00d200" stroke-width="0.200" textLength="23.8" lengthAdjust="spacingAndGlyphs" transform="rotate(-90 843.4 503)">125</text><text x="878.2" y="378.6" font-size="16.2" text-anchor="middle" font-family="Liberation Serif, serif" fill="#00d200" stroke="#00d200" stroke-width="0.200" textLength="26.5" lengthAdjust="spacingAndGlyphs" transform="rotate(-90 878.2 378.6)">425</text><text x="624" y="267" font-size="19.5" text-anchor="middle" font-family="Liberation Serif, serif" fill="#00d200" stroke="#00d200" stroke-width="0.200" textLength="13.8" lengthAdjust="spacingAndGlyphs">A</text><text x="420.7" y="470.4" font-size="19" text-anchor="middle" font-family="Liberation Serif, serif" fill="#00d200" stroke="#00d200" stroke-width="0.200" textLength="14" lengthAdjust="spacingAndGlyphs">D</text><text x="828" y="469.9" font-size="19" text-anchor="middle" font-family="Liberation Serif, serif" fill="#00d200" stroke="#00d200" stroke-width="0.200" textLength="11.8" lengthAdjust="spacingAndGlyphs">B</text><text x="343" y="583.8" font-size="16.5" text-anchor="start" font-family="Liberation Serif, serif" fill="#00d200" stroke="#00d200" stroke-width="0.200" textLength="25.2" lengthAdjust="spacingAndGlyphs">B20</text><text x="343" y="607.8" font-size="16.5" text-anchor="start" font-family="Liberation Serif, serif" fill="#00d200" stroke="#00d200" stroke-width="0.200" textLength="62.2" lengthAdjust="spacingAndGlyphs">A10@100</text><text x="293" y="583.500" font-size="15" font-family="Liberation Sans, Noto Sans CJK SC, sans-serif" fill="#d4ecf4">纵筋:</text><text x="293" y="607.500" font-size="15" font-family="Liberation Sans, Noto Sans CJK SC, sans-serif" fill="#d4ecf4">箍筋:</text></svg>
<div class="a" style="left:997.5px;top:171px;width:205.5px;height:306px;border:1.3px solid #b4b4b4;box-shadow:inset 1.2px 1.2px 0 #fff, 1.2px 1.2px 0 #fff"></div>
<div class="t" style="left:1006px;top:161.5px;background:#f0f0f0;padding:0 2px">墙柱纵筋</div>
<div class="a" style="left:997.5px;top:494px;width:205.5px;height:237px;border:1.3px solid #b4b4b4;box-shadow:inset 1.2px 1.2px 0 #fff, 1.2px 1.2px 0 #fff"></div>
<div class="t" style="left:1006px;top:484.5px;background:#f0f0f0;padding:0 2px">墙柱箍筋</div>
<div class="btn " style="left:1011px;top:188px;width:55px;height:26px;line-height:27px;">类型</div>
<div class="edit" style="left:1071.7px;top:188px;width:111.3px;height:25.5px;line-height:26px;padding-left:5.5px">B20</div>
<div class="btn " style="left:1071.5px;top:218.5px;width:112px;height:26px;line-height:27px;">添加钢筋</div>
<div class="btn " style="left:1071.5px;top:247px;width:112px;height:26px;line-height:27px;">删除钢筋</div>
<div class="btn " style="left:1071.5px;top:275.5px;width:112px;height:26px;line-height:27px;">添加控制线</div>
<div class="btn " style="left:1071.5px;top:304px;width:112px;height:26px;line-height:27px;">删除控制线</div>
<div class="btn " style="left:1071.5px;top:332.5px;width:112px;height:26px;line-height:27px;">更改规格</div>
<div class="btn " style="left:1071.5px;top:361px;width:112px;height:26px;line-height:27px;">钢筋高低位切换</div>
<div class="btn " style="left:1071.5px;top:389.5px;width:112px;height:26px;line-height:27px;">高低位批量切换</div>
<div class="btn " style="left:1071.5px;top:418px;width:112px;height:26px;line-height:27px;">高低位系统重置</div>
<div class="btn " style="left:1071.5px;top:446.5px;width:112px;height:26px;line-height:27px;">显示控制</div>
<div class="btn " style="left:1011px;top:511.5px;width:55px;height:26px;line-height:27px;">类型</div>
<div class="edit" style="left:1071.7px;top:511.5px;width:111.3px;height:25.5px;line-height:26px;padding-left:5.5px">A10@100</div>
<div class="btn " style="left:1071.5px;top:542px;width:112px;height:26px;line-height:27px;">添加拉筋</div>
<div class="btn " style="left:1071.5px;top:572.5px;width:112px;height:26px;line-height:27px;">添加四边形</div>
<div class="btn " style="left:1071.5px;top:603.5px;width:112px;height:26px;line-height:27px;"><span style="word-spacing:2.5px">添加 L 形</span></div>
<div class="btn " style="left:1071.5px;top:634px;width:112px;height:26px;line-height:27px;">删除</div>
<div class="btn " style="left:1071.5px;top:664.5px;width:112px;height:26px;line-height:27px;">更改规格</div>
<div class="btn " style="left:1071.5px;top:695px;width:112px;height:26px;line-height:27px;">显示控制</div>
<div class="btn " style="left:1118.5px;top:789.5px;width:87.5px;height:28px;line-height:29px;">钢筋计算</div>
<div class="btn " style="left:275.5px;top:640.5px;width:99px;height:26.5px;line-height:27.5px;">标准段设置</div>
<div class="a" style="left:386.5px;top:640.5px;width:240.5px;height:26.5px;background:#fff;box-shadow:inset 1.2px 1.2px 0 #9a9a9a, inset 2.400px 2.400px 0 #6e6e6e, inset -1.2px -1.2px 0 #fff, inset -2.400px -2.400px 0 #e6e6e6"></div>
<div class="t" style="left:391.5px;top:645px;font-size:15.600px;letter-spacing:0.2px">标准段1: -7.200m~21.600m</div>
<div class="btn " style="left:604.5px;top:643px;width:20.5px;height:21.5px;line-height:21.5px;"></div>
<svg style="left:609.5px;top:651px" width="11" height="6" viewBox="0 0 11 6"><path d="M0 0h10.500l-5.250 5.500z" fill="#000"/></svg>
<div class="btn pr" style="left:637px;top:640.5px;width:99px;height:26.5px;line-height:27.5px;">几何尺寸</div>
<div class="btn " style="left:742px;top:640.5px;width:99px;height:26.5px;line-height:27.5px;">保护层</div>
<div class="btn " style="left:873px;top:640.7px;width:99.5px;height:26.6px;line-height:27.6px;">更多设置</div>
<div class="a" style="left:275.6px;top:672.5px;width:694px;height:143.2px;background:#e0edfa;box-shadow:inset 1.4px 0 0 #8a8a8a, inset 0 2.200px 0 #707070, inset -1.5px -1.5px 0 #fff"></div>
<div class="th" style="left:277px;top:674.7px;width:88px;height:26.3px;line-height:28.5px">柱肢编号</div>
<div class="th" style="left:365px;top:674.7px;width:125px;height:26.3px;line-height:28.5px">宽度b1</div>
<div class="th" style="left:490px;top:674.7px;width:124.5px;height:26.3px;line-height:28.5px">宽度b2</div>
<div class="th" style="left:614.5px;top:674.7px;width:115px;height:26.3px;line-height:28.5px">柱肢长度</div>
<div class="th" style="left:729.5px;top:674.7px;width:115px;height:26.3px;line-height:28.5px">端头形式</div>
<div class="th" style="left:844.5px;top:674.7px;width:115px;height:26.3px;line-height:28.5px">柱肢设置</div>
<div class="th" style="left:277px;top:701px;width:88px;height:26px;line-height:27.4px;">A</div>
<div class="td" style="left:365px;top:701px;width:125px;height:26px;line-height:27.4px;">125</div>
<div class="td" style="left:490px;top:701px;width:124.5px;height:26px;line-height:27.4px;">125</div>
<div class="td" style="left:614.5px;top:701px;width:115px;height:26px;line-height:27.4px;">425</div>
<div class="td" style="left:729.5px;top:701px;width:115px;height:26px;line-height:29.4px;">非尽端</div>
<div class="td" style="left:844.5px;top:701px;width:115px;height:26px;line-height:29.4px;">设置</div>
<div class="th" style="left:277px;top:727px;width:88px;height:26px;line-height:27.4px;">B</div>
<div class="td" style="left:365px;top:727px;width:125px;height:26px;line-height:27.4px;">125</div>
<div class="td" style="left:490px;top:727px;width:124.5px;height:26px;line-height:27.4px;">125</div>
<div class="td" style="left:614.5px;top:727px;width:115px;height:26px;line-height:27.4px;">425</div>
<div class="td" style="left:729.5px;top:727px;width:115px;height:26px;line-height:29.4px;">非尽端</div>
<div class="td" style="left:844.5px;top:727px;width:115px;height:26px;line-height:29.4px;">设置</div>
<div class="th" style="left:277px;top:753px;width:88px;height:26.5px;line-height:27.9px;">D</div>
<div class="td" style="left:365px;top:753px;width:125px;height:26.5px;line-height:27.9px;background:#e6e6e6;">125</div>
<div class="td" style="left:490px;top:753px;width:124.5px;height:26.5px;line-height:27.9px;background:#e6e6e6;">125</div>
<div class="td" style="left:614.5px;top:753px;width:115px;height:26.5px;line-height:27.9px;">425</div>
<div class="td" style="left:729.5px;top:753px;width:115px;height:26.5px;line-height:29.9px;">非尽端</div>
<div class="td" style="left:844.5px;top:753px;width:115px;height:26.5px;line-height:29.9px;">设置</div>
<div class="a" style="left:275px;top:825.5px;width:930px;height:1.2px;background:#a8a8a8"></div>
<div class="a" style="left:275px;top:826.7px;width:930px;height:1.2px;background:#fff"></div>
<div class="btn dis" style="left:275.5px;top:836.5px;width:99px;height:27px;line-height:28px;">标准段复制</div>
<div class="a" style="left:397px;top:843px;width:14px;height:14px;background:#fff;box-shadow:inset 1.2px 1.2px 0 #8a8a8a, inset 2.2px 2.2px 0 #6e6e6e, inset -1px -1px 0 #f0f0f0"></div>
<div class="t" style="left:419px;top:842px;">联动修改</div>
<div class="btn def" style="left:926px;top:834.5px;width:88px;height:29px;line-height:30px;">确定</div>
<div class="btn " style="left:1022.5px;top:835px;width:87.5px;height:28px;line-height:29px;">取消</div>
<div class="btn " style="left:1118.5px;top:835px;width:87.5px;height:28px;line-height:29px;">帮助</div>
<div class="t" style="left:2px;top:894.5px;">版权所有：中国建筑标准设计研究院</div>
<div class="sp" style="left:932px;width:36px"></div>
<div class="sp" style="left:972px;width:36px">数字</div>
<div class="sp" style="left:1012px;width:36px"></div>
<div class="sp" style="left:1052px;width:169px">授权使用单位：老虎空间</div>
<div class="sp" style="left:1226px;width:110px">用户号：24866</div>
<div class="sp" style="left:1340px;width:74px">功能版本7</div>
<svg style="left:1424px;top:896px" width="16" height="16" viewBox="0 0 16 16"><path d="M15.500 1L1 15.500M15.500 6L6 15.500M15.500 11L11 15.500" stroke="#a0a0a0" stroke-width="1.300" fill="none"/><path d="M15.500 2.200L2.200 15.500M15.500 7.200L7.200 15.500M15.500 12.200L12.200 15.500" stroke="#fff" stroke-width="1" fill="none"/></svg>
</body></html>
